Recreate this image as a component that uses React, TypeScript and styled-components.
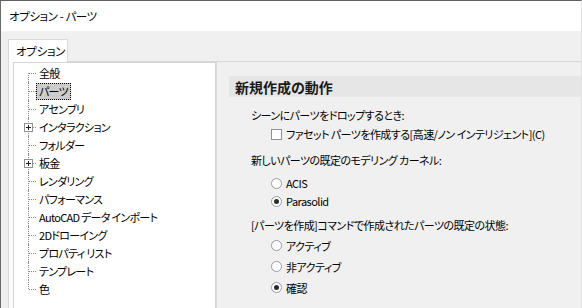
import React from 'react';
import styled, { createGlobalStyle } from 'styled-components';

const GlobalStyle = createGlobalStyle`
  html, body {
    margin: 0;
    padding: 0;
    background: #f0f0f0;
  }
  body {
    font-family: 'Noto Sans CJK JP', 'Noto Sans', sans-serif;
    font-size: 11px;
    letter-spacing: -0.7px;
    color: #000000;
    font-feature-settings: 'palt';
  }
`;

type TreeItem = {
  label: string,
  expandable?: boolean,
  selected?: boolean,
};

const treeItems: TreeItem[] = [
  { label: '全般' },
  { label: 'パーツ', selected: true },
  { label: 'アセンブリ' },
  { label: 'インタラクション', expandable: true },
  { label: 'フォルダー' },
  { label: '板金', expandable: true },
  { label: 'レンダリング' },
  { label: 'パフォーマンス' },
  { label: 'AutoCAD データ インポート' },
  { label: '2Dドローイング' },
  { label: 'プロパティ リスト' },
  { label: 'テンプレート' },
  { label: '色' },
];

const App = () => {
  return (
    <>
      <GlobalStyle />
      <Window>
        <TitleBar>オプション - パーツ</TitleBar>
        <Body>
          <TabStrip>
            <Tab>オプション</Tab>
          </TabStrip>
          <TabPage>
            <Tree>
              {treeItems.map((item, i) => (
                <TreeRow key={item.label} $first={i === 0} $last={i === treeItems.length - 1}>
                  {item.expandable && <Expander />}
                  <TreeLabel $selected={item.selected}>{item.label}</TreeLabel>
                </TreeRow>
              ))}
            </Tree>
            <Panel>
              <SectionHeader>新規作成の動作</SectionHeader>
              <Group $after={7}>
                <GroupLabel>シーンにパーツをドロップするとき:</GroupLabel>
                <Option $height={18}>
                  <CheckBox />
                  <span>ファセット パーツを作成する[高速/ノン インテリジェント](C)</span>
                </Option>
              </Group>
              <Group $labelGap={4} $after={5}>
                <GroupLabel>新しいパーツの既定のモデリング カーネル:</GroupLabel>
                <Option $height={18}>
                  <Radio />
                  <span>ACIS</span>
                </Option>
                <Option $height={18}>
                  <Radio $checked />
                  <span>Parasolid</span>
                </Option>
              </Group>
              <Group>
                <GroupLabel>[パーツを作成]コマンドで作成されたパーツの既定の状態:</GroupLabel>
                <Option>
                  <Radio />
                  <span>アクティブ</span>
                </Option>
                <Option>
                  <Radio />
                  <span>非アクティブ</span>
                </Option>
                <Option>
                  <Radio $checked />
                  <span>確認</span>
                </Option>
              </Group>
            </Panel>
          </TabPage>
        </Body>
      </Window>
    </>
  );
};

const Window = styled.div`
  width: 582px;
  height: 308px;
  box-sizing: border-box;
  display: flex;
  flex-direction: column;
  overflow: hidden;
  border-top: 1px solid #5f5f5f;
  border-left: 1px solid #6a6a6a;
  border-right: 1px solid #e2e2e2;
  background: #f0f0f0;
`;

const TitleBar = styled.div`
  height: 30px;
  flex: none;
  display: flex;
  align-items: center;
  padding-left: 8px;
  background: #ffffff;
  font-size: 11.5px;
  letter-spacing: -0.4px;
  line-height: 16px;
`;

const Body = styled.div`
  flex: 1;
  display: flex;
  flex-direction: column;
  padding: 8px 0 0 7px;
  min-height: 0;
`;

const TabStrip = styled.div`
  display: flex;
  height: 22px;
  flex: none;
`;

const Tab = styled.div`
  box-sizing: border-box;
  width: 60px;
  height: 23px;
  padding: 3px 0 0 7px;
  white-space: nowrap;
  background: #ffffff;
  border: 1px solid #d9d9d9;
  border-bottom: none;
  position: relative;
  z-index: 1;
  line-height: 16px;
  font-size: 11.5px;
  letter-spacing: -0.3px;
`;

const TabPage = styled.div`
  flex: 1;
  display: flex;
  min-height: 0;
  border-top: 1px solid #d9d9d9;
  border-left: 1px solid #d9d9d9;
  background: #fcfcfc;
  padding-left: 4px;
`;

const Tree = styled.div`
  width: 203px;
  flex: none;
  box-sizing: border-box;
  background: #ffffff;
  border: 1px solid #d4d4d4;
  border-bottom: none;
  padding-top: 1px;
`;

const TreeRow = styled.div<{ $first?: boolean, $last?: boolean }>`
  position: relative;
  height: 18px;
  display: flex;
  align-items: center;
  padding-left: 22px;

  &::before {
    content: '';
    position: absolute;
    left: 14px;
    top: ${p => (p.$first ? '9px' : '0')};
    height: ${p => (p.$first || p.$last ? '9px' : '18px')};
    border-left: 1px dotted #8a8a8a;
  }

  &::after {
    content: '';
    position: absolute;
    left: 15px;
    top: 9px;
    width: 7px;
    border-top: 1px dotted #8a8a8a;
  }
`;

const Expander = styled.span`
  position: absolute;
  left: 10px;
  top: 5px;
  width: 9px;
  height: 9px;
  box-sizing: border-box;
  border: 1px solid #919191;
  background: #ffffff;
  z-index: 1;

  &::before {
    content: '';
    position: absolute;
    left: 1px;
    top: 3px;
    width: 5px;
    height: 1px;
    background: #1e1e1e;
  }

  &::after {
    content: '';
    position: absolute;
    left: 3px;
    top: 1px;
    width: 1px;
    height: 5px;
    background: #1e1e1e;
  }
`;

const TreeLabel = styled.span<{ $selected?: boolean }>`
  line-height: 15px;
  padding: 0 2px;
  white-space: nowrap;
  border: 1px ${p => (p.$selected ? 'dotted #000000' : 'solid transparent')};
  background: ${p => (p.$selected ? '#cccccc' : 'transparent')};
`;

const Panel = styled.div`
  flex: 1;
  min-width: 0;
  background: #f0f0f0;
  border-left: 1px solid #d9d9d9;
  padding: 14px 0 0 12px;
  display: flex;
  flex-direction: column;
  letter-spacing: -0.55px;
`;

const SectionHeader = styled.div`
  height: 21px;
  flex: none;
  display: flex;
  align-items: center;
  padding-left: 6px;
  background: #e6e6e6;
  font-size: 14px;
  letter-spacing: 0;
  font-weight: bold;
  color: #1a1a1a;
  margin-bottom: 8px;
`;

const Group = styled.div<{ $labelGap?: number, $after?: number }>`
  display: flex;
  flex-direction: column;
  padding-left: 22px;
  margin-bottom: ${p => p.$after ?? 0}px;

  & > div:first-child {
    margin-bottom: ${p => p.$labelGap ?? 0}px;
  }
`;

const GroupLabel = styled.div`
  height: 20px;
  display: flex;
  align-items: center;
  white-space: nowrap;
`;

const Option = styled.label<{ $height?: number }>`
  height: ${p => p.$height ?? 21}px;
  display: flex;
  align-items: center;
  gap: 4px;
  padding-left: 20px;
  white-space: nowrap;
`;

const CheckBox = styled.span`
  width: 11px;
  height: 11px;
  box-sizing: border-box;
  border: 1px solid #8f8f8f;
  background: #ffffff;
  flex: none;
`;

const Radio = styled.span<{ $checked?: boolean }>`
  width: 11px;
  height: 11px;
  box-sizing: border-box;
  border-radius: 50%;
  border: 1px solid #9a9a9a;
  background: #ffffff;
  flex: none;
  display: flex;
  align-items: center;
  justify-content: center;

  &::after {
    content: '';
    width: 5px;
    height: 5px;
    border-radius: 50%;
    background: ${p => (p.$checked ? '#2b2b2b' : 'transparent')};
  }
`;

export default App;
